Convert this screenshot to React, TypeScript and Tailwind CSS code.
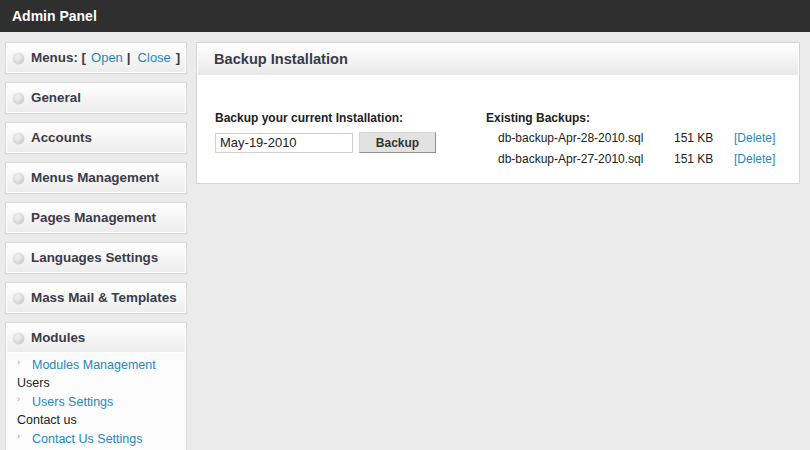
import React from 'react';

const menus = [
  'General',
  'Accounts',
  'Menus Management',
  'Pages Management',
  'Languages Settings',
  'Mass Mail & Templates',
];

const backups = [
  { file: 'db-backup-Apr-28-2010.sql', size: '151 KB' },
  { file: 'db-backup-Apr-27-2010.sql', size: '151 KB' },
];

// small grey ball used as bullet on every sidebar heading
const Bullet = () => (
  <svg width="13" height="13" viewBox="0 0 13 13" className="shrink-0">
    <defs>
      <radialGradient id="ball" cx="40%" cy="35%" r="70%">
        <stop offset="0%" stopColor="#f2f2f2" />
        <stop offset="100%" stopColor="#cdcdcd" />
      </radialGradient>
    </defs>
    <circle cx="6.5" cy="6.5" r="6" fill="url(#ball)" />
    <path d="M5.5 4.3 L8.3 6.5 L5.5 8.7 Z" fill="#e9e9e9" />
  </svg>
);

const Heading = ({ children }: { children: React.ReactNode }) => (
  <div className="flex h-[30px] items-center gap-[6px] bg-gradient-to-b from-white to-[#ececec] pl-[6px] text-[13.4px] font-bold text-[#3b3b4a] shadow-[inset_0_0_0_1px_#ffffff]">
    <Bullet />
    <span>{children}</span>
  </div>
);

const SubLink = ({ label }: { label: string }) => (
  <div className="flex h-[18.5px] items-center pl-[11px]">
    <span className="mb-[5px] w-[15px] text-[9px] text-[#999]">›</span>
    <a className="text-[#1e88c0]">{label}</a>
  </div>
);

export default function App() {
  return (
    <div
      className="h-[450px] w-[810px] overflow-hidden bg-[#ebebeb] text-[#222]"
      style={{ fontFamily: '"Liberation Sans", Arial, sans-serif' }}
    >
      {/* Top bar */}
      <div className="flex h-[32px] items-center bg-[#2f2f2f] pl-[12px] text-[14px] font-bold text-white">
        Admin Panel
      </div>

      <div className="flex items-start gap-[9px] pl-[5px] pr-[10px] pt-[10px]">
        {/* Sidebar */}
        <div className="flex w-[182px] shrink-0 flex-col gap-[8px]">
          <div className="border border-[#d8d8d8]">
            <div className="flex h-[30px] items-center gap-[5px] bg-gradient-to-b from-white to-[#ececec] pl-[6px] text-[13.4px] shadow-[inset_0_0_0_1px_#ffffff]">
              <Bullet />
              <span className="ml-px font-bold text-[#3b3b4a]">Menus: [</span>
              <a className="text-[13px] text-[#1e88c0]">Open</a>
              <span className="-ml-[1px] font-bold text-[#3b3b4a]">|</span>
              <a className="ml-[2px] text-[13px] text-[#1e88c0]">Close</a>
              <span className="font-bold text-[#3b3b4a]">]</span>
            </div>
          </div>

          {menus.map((m) => (
            <div key={m} className="border border-[#d8d8d8]">
              <Heading>{m}</Heading>
            </div>
          ))}

          <div className="border border-[#d8d8d8] bg-[#fcfcfc]">
            <Heading>Modules</Heading>
            <div className="pt-[3px] pb-[6px] text-[12.5px]">
              <SubLink label="Modules Management" />
              <div className="flex h-[18.5px] items-center pl-[11px]">Users</div>
              <SubLink label="Users Settings" />
              <div className="flex h-[18.5px] items-center pl-[11px]">Contact us</div>
              <SubLink label="Contact Us Settings" />
            </div>
          </div>
        </div>

        {/* Main panel */}
        <div className="flex-1 border border-[#d4d4d4] bg-white p-px">
          <div className="flex h-[31px] items-center bg-gradient-to-b from-white to-[#e9e9e9] pl-[16px] text-[14.6px] font-bold text-[#3b3b4a]">
            Backup Installation
          </div>

          <div className="flex pb-[13px] pl-[17px] pt-[34px] text-[12px]">
            <div className="w-[271px]">
              <div className="font-bold">Backup your current Installation:</div>
              <div className="mt-[5px] flex items-center gap-[6px]">
                <input
                  defaultValue="May-19-2010"
                  className="h-[20px] w-[138px] border border-[#cfcfcf] bg-white px-[4px] text-[13px] text-[#222] outline-none"
                />
                <button className="h-[21px] w-[77px] border border-[#d6d6d6] border-b-[#8f8f8f] border-r-[#8f8f8f] bg-[#e2e2e2] text-[12px] font-bold text-[#333]">
                  Backup
                </button>
              </div>
            </div>

            <div>
              <div className="font-bold">Existing Backups:</div>
              <div className="flex flex-col">
                {backups.map((b) => (
                  <div key={b.file} className="flex h-[21px] items-center pl-[12px]">
                    <span className="w-[176px]">{b.file}</span>
                    <span className="w-[60px]">{b.size}</span>
                    <a className="text-[#1e88c0]">[Delete]</a>
                  </div>
                ))}
              </div>
            </div>
          </div>
        </div>
      </div>
    </div>
  );
}
